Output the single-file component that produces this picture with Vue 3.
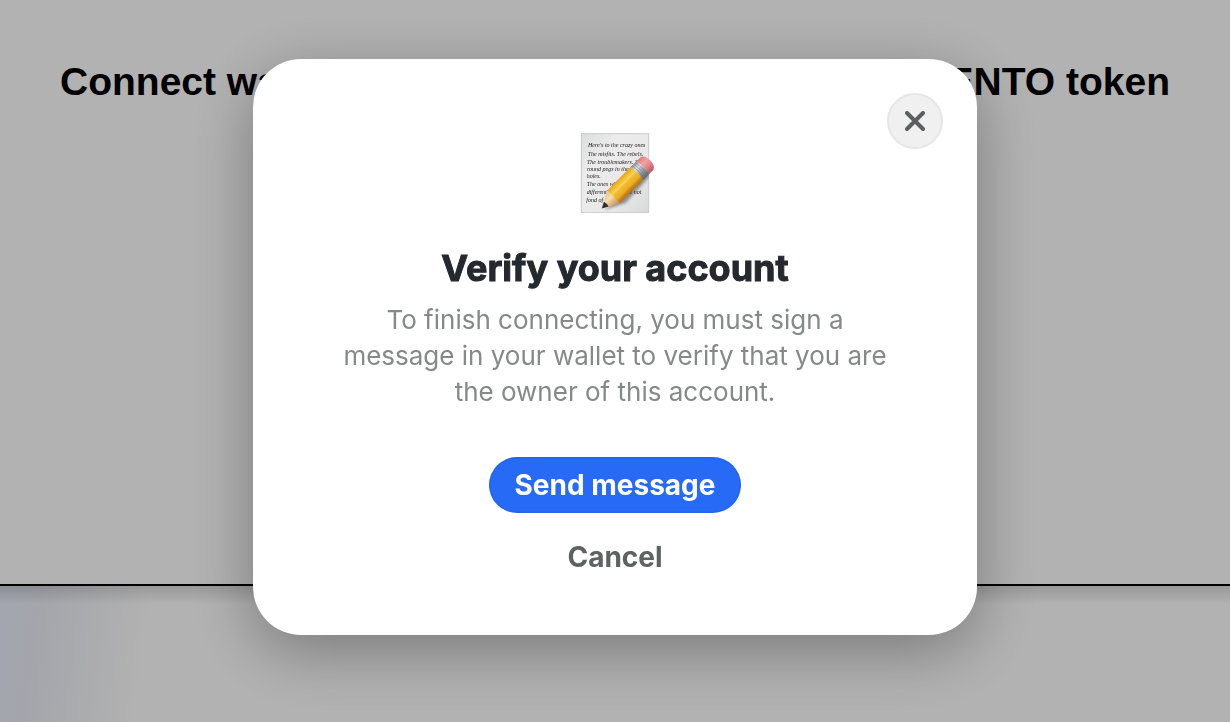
<script setup>
import { ref } from 'vue'

const open = ref(true)
const note = [
  { y: 81, x: 57, text: "Here's to the crazy ones" },
  { y: 107, x: 56, text: 'The misfits. The rebels.' },
  { y: 132, x: 54, text: 'The troublemakers. The' },
  { y: 152, x: 54, text: 'round pegs in the' },
  { y: 173, x: 53, text: 'holes.' },
  { y: 197, x: 53, text: 'The ones who see' },
  { y: 222, x: 53, text: 'differently. They’re not' },
  { y: 247, x: 52, text: 'fond of rules.' }
]
</script>

<template>
  <div class="page">
    <main class="hero">
      <h1 class="headline"><span>Connect wallet</span><span>MENTO token</span></h1>
    </main>
    <footer class="footer"></footer>

    <div v-if="open" class="overlay">
      <section class="dialog" role="dialog" aria-modal="true" aria-labelledby="dialog-title">
        <button class="close" type="button" aria-label="Close" @click="open = false">
          <svg viewBox="0 0 20 20" width="20" height="20" aria-hidden="true">
            <path d="M2 2 18 18M18 2 2 18" />
          </svg>
        </button>

        <svg class="memo" viewBox="18 39 240 240" aria-hidden="true">
          <defs>
            <linearGradient id="paper" x1="0" y1="0" x2="1" y2="1">
              <stop offset="0" stop-color="#dcdddd" />
              <stop offset=".3" stop-color="#ececec" />
              <stop offset=".7" stop-color="#e8e8e8" />
              <stop offset="1" stop-color="#d8d9d9" />
            </linearGradient>
            <linearGradient id="barrel" x1="0" y1="0" x2="0" y2="1">
              <stop offset="0" stop-color="#e3a51c" />
              <stop offset=".24" stop-color="#f6c436" />
              <stop offset=".36" stop-color="#fbd556" />
              <stop offset=".44" stop-color="#f4bb31" />
              <stop offset=".74" stop-color="#e9ab28" />
              <stop offset=".82" stop-color="#cf8a1a" />
              <stop offset="1" stop-color="#b3741a" />
            </linearGradient>
            <linearGradient id="wood" x1="0" y1="0" x2="0" y2="1">
              <stop offset="0" stop-color="#e3c08c" />
              <stop offset=".4" stop-color="#f6dcae" />
              <stop offset="1" stop-color="#bd8c58" />
            </linearGradient>
            <linearGradient id="metal" x1="0" y1="0" x2="0" y2="1">
              <stop offset="0" stop-color="#8b8f95" />
              <stop offset=".28" stop-color="#dfe2e5" />
              <stop offset=".6" stop-color="#9ba0a6" />
              <stop offset="1" stop-color="#60656c" />
            </linearGradient>
            <linearGradient id="rubber" x1="0" y1="0" x2="0" y2="1">
              <stop offset="0" stop-color="#dc7d80" />
              <stop offset=".35" stop-color="#f2a3a4" />
              <stop offset=".7" stop-color="#e08083" />
              <stop offset="1" stop-color="#b8555b" />
            </linearGradient>
            <filter id="soft" x="-20%" y="-50%" width="140%" height="200%">
              <feGaussianBlur stdDeviation="4" />
            </filter>
            <clipPath id="sheet"><rect x="37" y="41" width="202" height="237" /></clipPath>
          </defs>
          <rect x="37" y="41" width="202" height="237" fill="url(#paper)" stroke="#c9caca" stroke-width="3" />
          <g clip-path="url(#sheet)">
            <g class="script">
              <text v-for="l in note" :key="l.y" :x="l.x" :y="l.y">{{ l.text }}</text>
            </g>
            <path d="M106 270 170 248 246 165 234 154 150 232Z" fill="#333" opacity=".5" filter="url(#soft)" />
          </g>
          <g transform="translate(99 265) rotate(-45)">
            <path d="M0 0 48-27Q54-14 49-9 55 0 49 9 54 15 48 27Z" fill="url(#wood)" />
            <path d="M-1 0 18-10Q21 0 18 10Z" fill="#34302d" />
            <path d="M48-27H150V27H48Q53 17 48 9 54 0 48-9 53-16 48-27Z" fill="url(#barrel)" />
            <path d="M148-27H175Q179 0 175 27H148Q153 0 148-27Z" fill="url(#metal)" />
            <path d="M154-27Q159 0 154 27M161-27Q166 0 161 27M168-27Q173 0 168 27" fill="none" stroke="#6d737b" stroke-width="2" opacity=".7" />
            <path d="M174-27H190Q204-23 204 0T190 27H174Q179 0 174-27Z" fill="url(#rubber)" />
          </g>
        </svg>

        <h2 id="dialog-title" class="title">Verify your account</h2>
        <p class="copy">
          To finish connecting, you must sign a message in your wallet to verify that you are the owner of this account.
        </p>
        <button class="send" type="button">Send message</button>
        <button class="cancel" type="button" @click="open = false">Cancel</button>
      </section>
    </div>
  </div>
</template>

<style>
body {
  margin: 0;
  background: #fff;
}
</style>

<style scoped>
.page {
  display: flex;
  flex-direction: column;
  min-height: 100vh;
  font-family: Inter, "Liberation Sans", sans-serif;
}
.hero {
  flex: 1;
  padding: 56px 60px 0;
  border-bottom: 2px solid #000;
}
.headline {
  display: flex;
  justify-content: space-between;
  margin: 0;
  font-family: "Liberation Sans", Arial, sans-serif;
  font-size: 39px;
  line-height: 52px;
  font-weight: 700;
  color: #000;
}
.footer {
  height: 136px;
  background:
    linear-gradient(180deg, rgba(0, 0, 0, .14), transparent 18px),
    linear-gradient(97deg, #e9eefa 0, #ebedf6 40px, #f4f5f9 90px, #fff 150px);
}
.overlay {
  position: fixed;
  inset: 0;
  display: flex;
  align-items: center;
  justify-content: center;
  padding-bottom: 28px;
  background: rgba(0, 0, 0, .3);
}
.dialog {
  position: relative;
  box-sizing: border-box;
  display: flex;
  flex-direction: column;
  align-items: center;
  width: 100%;
  max-width: 724px;
  padding: 74px 80px 54px;
  border-radius: 48px;
  background: #fff;
  box-shadow: 0 16px 64px rgba(0, 0, 0, .32);
  text-align: center;
}
button {
  font-family: inherit;
  cursor: pointer;
}
.close {
  position: absolute;
  top: 34px;
  right: 34px;
  display: flex;
  align-items: center;
  justify-content: center;
  width: 56px;
  height: 56px;
  padding: 0;
  border: 2px solid #e6e6e6;
  border-radius: 50%;
  background: #f0f0f0;
}
.close path {
  fill: none;
  stroke: #5b5f5f;
  stroke-width: 4;
  stroke-linecap: round;
}
.memo {
  width: 80px;
  height: 80px;
}
.script {
  font-family: "Liberation Serif", serif;
  font-size: 18px;
  font-style: italic;
  fill: #202020;
}
.title {
  margin: 32px 0 0;
  font-size: 36px;
  line-height: 46px;
  font-weight: 700;
  color: #25292e;
  -webkit-text-stroke: 1px #25292e;
}
.copy {
  max-width: 564px;
  margin: 11px 0 0;
  font-size: 26px;
  line-height: 36px;
  color: #868989;
}
.send {
  height: 56px;
  margin-top: 47px;
  padding: 0 26px;
  border: 0;
  border-radius: 28px;
  background: #266af5;
  box-shadow: inset 0 0 0 2px rgba(0, 0, 0, .03);
  color: #fff;
  font-size: 28px;
  font-weight: 700;
}
.cancel {
  height: 48px;
  margin-top: 20px;
  padding: 0 24px;
  border: 0;
  background: none;
  color: #5e6262;
  font-size: 28px;
  font-weight: 700;
}
</style>
